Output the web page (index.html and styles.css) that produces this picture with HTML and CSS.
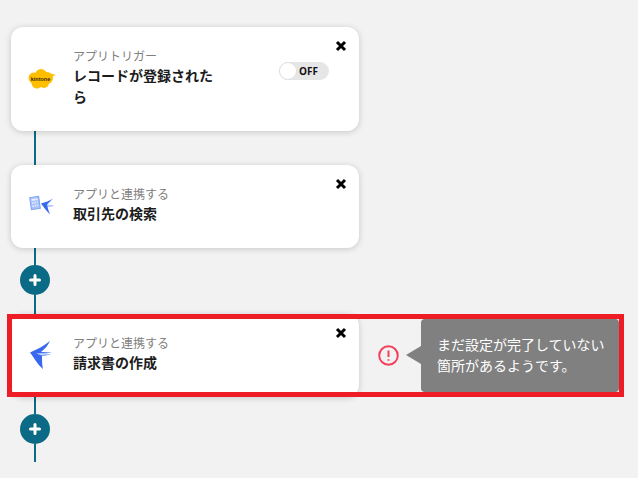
FILE: index.html
```html
<!DOCTYPE html>
<html lang="ja">
<head>
  <meta charset="UTF-8" />
  <title>フロー</title>
  <link rel="stylesheet" href="styles.css">
</head>
<body>
  <div class="flow">
    <div class="card card-tall">
      <svg class="app-icon" viewBox="0 0 30 30">
        <g fill="#ffbe00">
          <circle cx="7" cy="14" r="5.500"/>
          <circle cx="14" cy="11" r="6"/>
          <circle cx="20" cy="14" r="6"/>
          <circle cx="10" cy="19" r="5.500"/>
          <circle cx="17" cy="19" r="5"/>
          <path d="M18 8l11 3-8 3z"/>
        </g>
        <text x="13.500" y="16.500" class="kintone">kintone</text>
      </svg>
      <div class="card-text">
        <div class="card-label">アプリトリガー</div>
        <div class="card-title">レコードが登録された<br>ら</div>
      </div>
      <div class="toggle"><span class="knob"></span><span class="toggle-text">OFF</span></div>
      <svg class="close" viewBox="0 0 12 12"><path d="M2 2l8 8M10 2l-8 8"/></svg>
    </div>

    <div class="line line-gap"></div>

    <div class="card">
      <svg class="app-icon" viewBox="0 0 30 30">
        <g transform="rotate(-8 8 11)">
          <rect x="3.500" y="5" width="9" height="12" fill="#a9c3fb" stroke="#7fa2f5"/>
          <path fill="#e6edff" d="M5 6.500h6v2H5zM5 10h1.500v1.500H5zM7.500 10H9v1.500H7.500zM10 10h1v1.500h-1zM5 13h1.500v1.500H5zM7.500 13H9v1.500H7.500zM10 13h1v1.500h-1z"/>
        </g>
        <path fill="#3768ee" d="M14 11.500C18 10.500 23 8.500 26 6.500C24 8.500 22 10.500 20 12.500L27 14L20.500 14.500C21 17 22 20 23 22.500C20 19.500 17 15.500 14 11.500z"/>
        <path fill="#c4d5fc" d="M20 12.500L27 14L20.500 14.500z"/>
      </svg>
      <div class="card-text">
        <div class="card-label">アプリと連携する</div>
        <div class="card-title">取引先の検索</div>
      </div>
      <svg class="close" viewBox="0 0 12 12"><path d="M2 2l8 8M10 2l-8 8"/></svg>
    </div>

    <div class="line"></div>
    <div class="plus"><svg viewBox="0 0 12 12"><path d="M6 1.500v9M1.500 6h9"/></svg></div>
    <div class="line line-long"></div>

    <div class="error-row">
      <div class="card">
        <svg class="app-icon" viewBox="0 0 30 30">
          <path fill="#3768ee" d="M3 11.500C9 9 17 5 23 0C21 4 18 8 14 11L25 11.500L15 13L24 13.500L15 15C15 20 15 24 16 28C11 24 7 17 3 11.500z"/>
          <path fill="#c4d5fc" d="M9 12.500L25 11.500L15 13L24 13.500L15 14.500z"/>
        </svg>
        <div class="card-text">
          <div class="card-label">アプリと連携する</div>
          <div class="card-title">請求書の作成</div>
        </div>
        <svg class="close" viewBox="0 0 12 12"><path d="M2 2l8 8M10 2l-8 8"/></svg>
      </div>
      <svg class="warn" viewBox="0 0 21 21">
        <circle cx="10.500" cy="10.500" r="9.300"/>
        <path d="M10.500 5.500v6.500M10.500 14.300v1.500"/>
      </svg>
      <div class="tooltip">まだ設定が完了していない<br>箇所があるようです。</div>
      <div class="highlight"></div>
    </div>

    <div class="line"></div>
    <div class="plus"><svg viewBox="0 0 12 12"><path d="M6 1.500v9M1.500 6h9"/></svg></div>
    <div class="line line-end"></div>
  </div>
</body>
</html>
```

FILE: styles.css
```css
body {
  margin: 0;
  background-color: #f2f2f2;
  font-family: "Noto Sans CJK JP", "Noto Sans", sans-serif;
}
.flow {
  display: flex;
  flex-direction: column;
  align-items: flex-start;
  padding: 27px 0 0 11px;
}
.card {
  position: relative;
  display: flex;
  align-items: center;
  box-sizing: border-box;
  width: 348px;
  height: 83px;
  padding-left: 16px;
  background: #fff;
  border-radius: 12px;
  box-shadow: 0 1px 6px rgba(0,0,0,0.18);
}
.card-tall {
  height: 104px;
}
.app-icon {
  flex: none;
  width: 30px;
  height: 30px;
  margin-right: 16px;
}
.kintone {
  font-family: "Liberation Sans", sans-serif;
  font-size: 5.500px;
  font-weight: bold;
  text-anchor: middle;
  fill: #3a2a00;
}
.card-text {
  align-self: flex-start;
  width: 145px;
  padding-top: 20px;
}
.card-label {
  height: 18px;
  font-size: 12px;
  line-height: 18px;
  color: #808080;
}
.card-title {
  font-size: 14px;
  font-weight: 700;
  line-height: 21px;
  color: #1c1c1c;
}
.toggle {
  align-self: flex-start;
  display: flex;
  align-items: center;
  box-sizing: border-box;
  width: 50px;
  height: 18px;
  margin: 35px 0 0 61px;
  background: #e6e6e6;
  border-radius: 9px;
}
.knob {
  flex: none;
  box-sizing: border-box;
  width: 18px;
  height: 18px;
  background: #fff;
  border: 1px solid #e0e0e0;
  border-radius: 50%;
}
.toggle-text {
  margin-left: 2px;
  font-family: "Open Sans", sans-serif;
  font-size: 10px;
  font-weight: 700;
  color: #111;
}
.close {
  position: absolute;
  top: 13px;
  right: 12px;
  width: 12px;
  height: 12px;
  fill: none;
  stroke: #000;
  stroke-width: 3;
}
.line {
  width: 2px;
  height: 17px;
  margin-left: 23px;
  background: #0b6a85;
}
.line-gap {
  height: 34px;
}
.line-long {
  height: 19px;
}
.line-end {
  height: 18px;
}
.plus {
  display: flex;
  align-items: center;
  justify-content: center;
  width: 30px;
  height: 30px;
  margin-left: 9px;
  background: #0b6a85;
  border-radius: 50%;
}
.plus svg {
  width: 12px;
  height: 12px;
  fill: none;
  stroke: #fff;
  stroke-width: 3;
  stroke-linecap: round;
}
.error-row {
  position: relative;
  display: flex;
  align-items: center;
}
.warn {
  flex: none;
  width: 21px;
  height: 21px;
  margin: 0 22px 0 19px;
  fill: none;
  stroke: #f5405c;
  stroke-width: 2;
}
.tooltip {
  position: relative;
  box-sizing: border-box;
  width: 198px;
  height: 73px;
  padding: 15px 0 0 16px;
  background: #808080;
  border-radius: 4px;
  font-size: 14px;
  line-height: 21px;
  color: #fff;
}
.tooltip::before {
  content: "";
  position: absolute;
  top: 27px;
  left: -15px;
  border-style: solid;
  border-width: 9px 15px 9px 0;
  border-color: transparent #808080 transparent transparent;
}
.highlight {
  position: absolute;
  top: 0;
  left: -4px;
  box-sizing: border-box;
  width: 617px;
  height: 83px;
  border: 5px solid #ee1c25;
}
```
